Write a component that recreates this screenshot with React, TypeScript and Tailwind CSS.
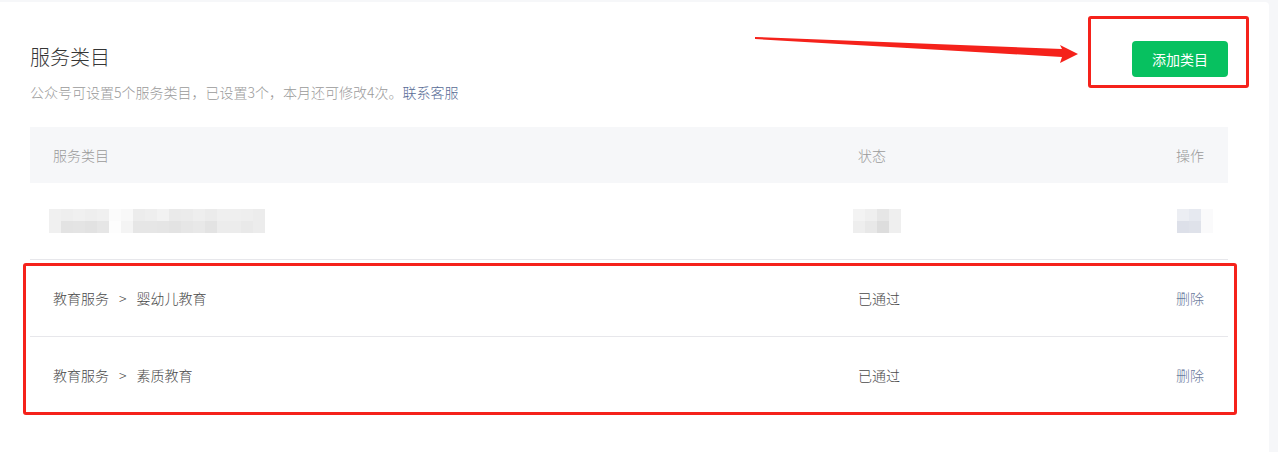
const rowBlurTop = [
  "bg-[#f0f0f0]", "bg-[#eeeeee]", "bg-[#f0f0f0]", "bg-[#eeeeee]", "bg-[#f0f0f0]", "bg-[#fbfbfb]",
  "bg-[#f8f8f8]", "bg-[#ececec]", "bg-[#eeeeee]", "bg-[#f2f2f2]", "bg-[#eaeaea]", "bg-[#ebebeb]",
  "bg-[#eeeeee]", "bg-[#ebebeb]", "bg-[#efefef]", "bg-[#efefef]", "bg-[#eeeeee]", "bg-[#ececec]",
];
const rowBlurBottom = [
  "bg-[#f0f0f0]", "bg-[#e3e3e3]", "bg-[#e4e4e4]", "bg-[#e2e2e2]", "bg-[#e6e6e6]", "bg-[#fdfdfd]",
  "bg-[#f4f4f4]", "bg-[#e6e6e6]", "bg-[#e6e6e6]", "bg-[#e5e5e5]", "bg-[#e3e3e3]", "bg-[#e6e6e6]",
  "bg-[#e8e8e8]", "bg-[#e3e3e3]", "bg-[#ececec]", "bg-[#ececec]", "bg-[#e9e9e9]", "bg-[#ececec]",
];
const statusBlurTop = ["bg-[#f3f3f3]", "bg-[#efefef]", "bg-[#e6e6e6]", "bg-[#efefef]"];
const statusBlurBottom = ["bg-[#eeeeee]", "bg-[#e8e8e8]", "bg-[#dddddd]", "bg-[#efefef]"];
const opBlurTop = ["bg-[#eceef3]", "bg-[#e6e9f0]", "bg-[#fafafb]"];
const opBlurBottom = ["bg-[#dde0e9]", "bg-[#dfe2ea]", "bg-[#fafafb]"];

function Pixelated({ top, bottom }: { top: string[]; bottom: string[] }) {
  return (
    <div className="inline-flex flex-col">
      <div className="flex">
        {top.map((c, i) => (
          <div key={i} className={`w-[12px] h-[12px] ${c}`} />
        ))}
      </div>
      <div className="flex">
        {bottom.map((c, i) => (
          <div key={i} className={`w-[12px] h-[12px] ${c}`} />
        ))}
      </div>
    </div>
  );
}

const rows = [
  { parent: "教育服务", child: "婴幼儿教育", status: "已通过" },
  { parent: "教育服务", child: "素质教育", status: "已通过" },
];

export default function App() {
  return (
    <div className="relative h-[452px] bg-[#f6f7f9] pt-[2px] pr-[9px] font-['Noto_Sans_CJK_SC',sans-serif] font-light overflow-hidden">
      <div className="h-full bg-white rounded-tr-[4px] pl-[30px] pr-[41px] pt-[39px]">
        {/* Header */}
        <div className="flex justify-between items-start">
          <div className="mt-[2px]">
            <h2 className="text-[20px] leading-[28px] text-[#353535]">服务类目</h2>
            <p className="mt-[11px] text-[14px] leading-[20px] text-[#9a9a9a]">
              公众号可设置5个服务类目，已设置3个，本月还可修改4次。
              <a className="text-[#576b95]">联系客服</a>
            </p>
          </div>
          <button className="w-[96px] h-[36px] rounded-[4px] bg-[#07c160] text-white text-[14px] font-normal">
            添加类目
          </button>
        </div>

        {/* Table */}
        <div className="mt-[25px] text-[14px]">
          <div className="grid grid-cols-[804px_1fr_120px] h-[56px] items-center bg-[#f6f7f9] text-[#9a9a9a]">
            <div className="pl-[23px]">服务类目</div>
            <div className="pl-[24px]">状态</div>
            <div className="pr-[24px] text-right">操作</div>
          </div>

          <div className="grid grid-cols-[804px_1fr_120px] h-[77px] items-center border-b border-[#e7e7eb]">
            <div className="pl-[19px] flex">
              <Pixelated top={rowBlurTop} bottom={rowBlurBottom} />
            </div>
            <div className="pl-[19px] flex">
              <Pixelated top={statusBlurTop} bottom={statusBlurBottom} />
            </div>
            <div className="pr-[15px] flex justify-end">
              <Pixelated top={opBlurTop} bottom={opBlurBottom} />
            </div>
          </div>

          {rows.map((r, i) => (
            <div
              key={i}
              className={`grid grid-cols-[804px_1fr_120px] h-[77px] items-center text-[#4a4a4a] ${
                i === 0 ? "border-b border-[#e7e7eb]" : ""
              }`}
            >
              <div className="pl-[23px]">
                {r.parent}
                <span className="mx-[10px]">&gt;</span>
                {r.child}
              </div>
              <div className="pl-[24px]">{r.status}</div>
              <div className="pr-[24px] text-right">
                <a className="text-[#6b7a9c]">删除</a>
              </div>
            </div>
          ))}
        </div>
      </div>

      {/* Annotations */}
      <div className="absolute left-[1088px] top-[16px] w-[161px] h-[72px] border-[3px] border-[#f5221b] rounded-[3px] pointer-events-none" />
      <div className="absolute left-[23px] top-[263px] w-[1214px] h-[152px] border-[3px] border-[#f5221b] rounded-[3px] pointer-events-none" />
      <svg className="absolute left-0 top-0 pointer-events-none" width="1278" height="452">
        <polygon
          points="755,37 1062,49 1060,45 1078,54 1060,63 1062,57 755,39"
          fill="#f5221b"
        />
      </svg>
    </div>
  );
}
